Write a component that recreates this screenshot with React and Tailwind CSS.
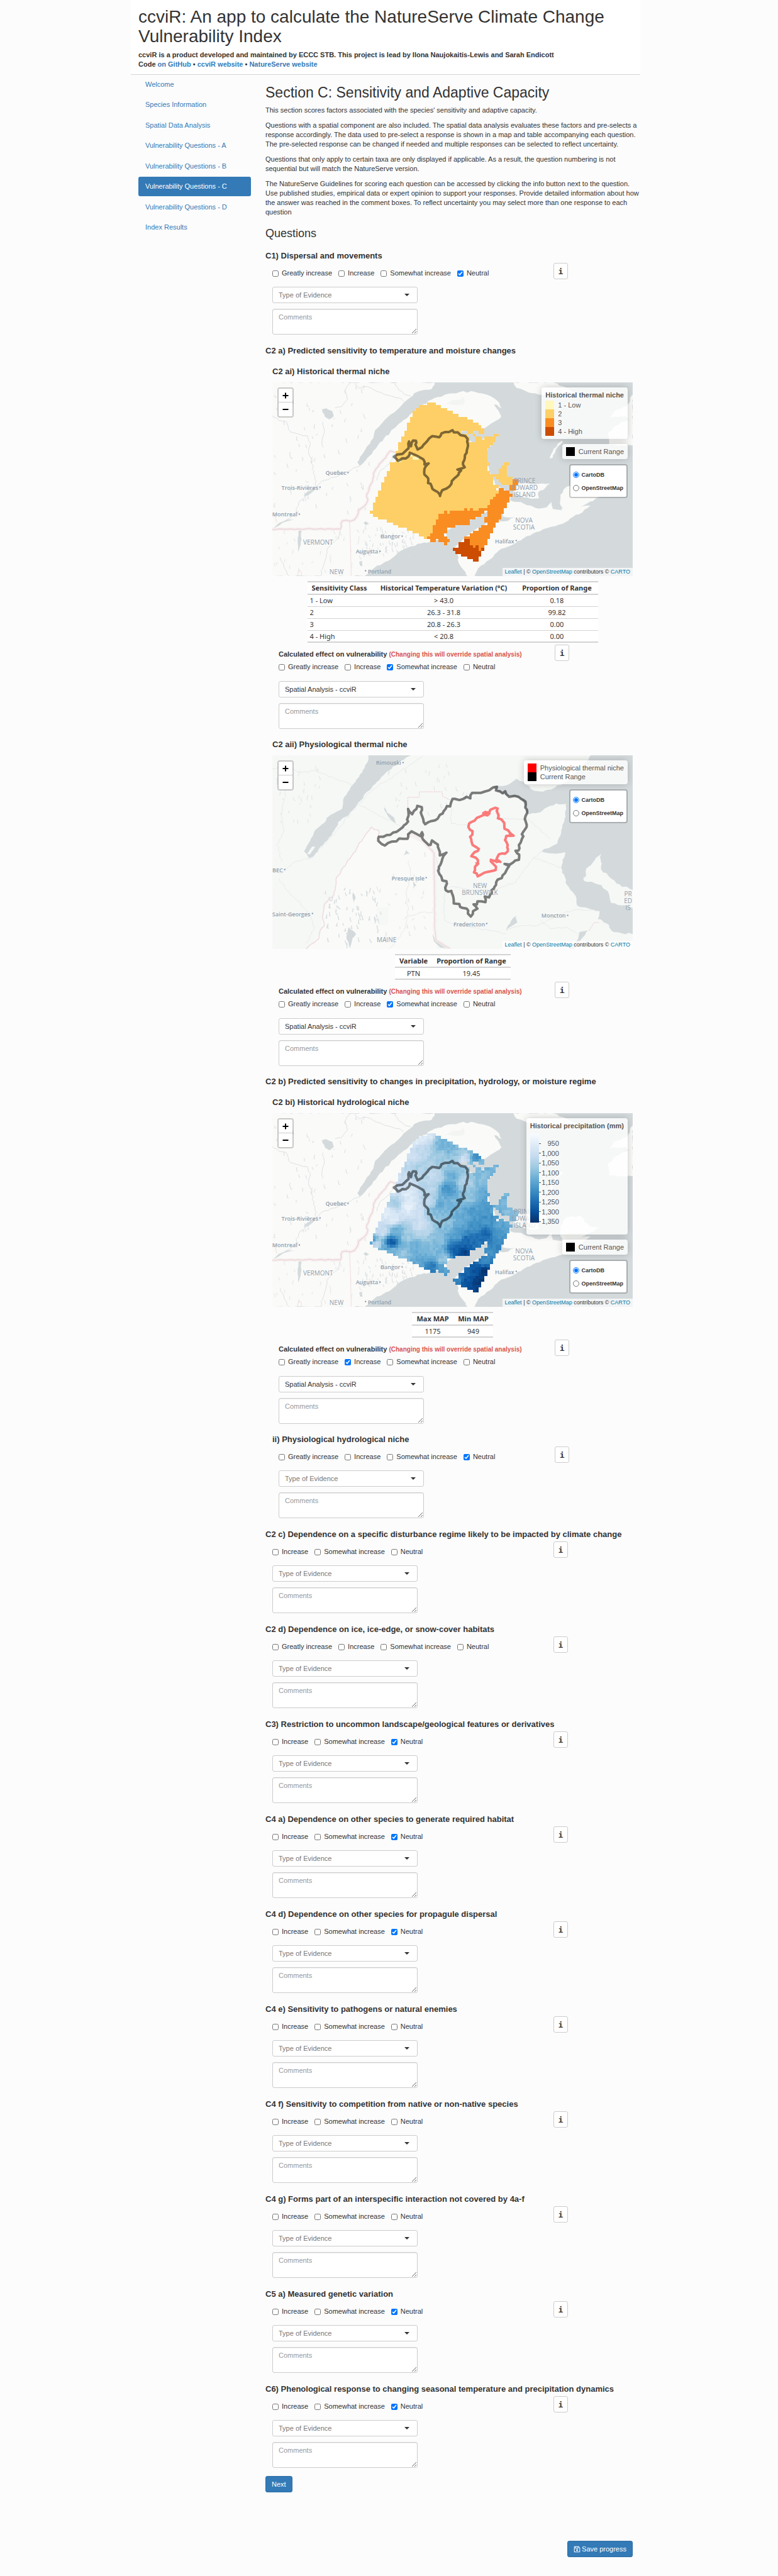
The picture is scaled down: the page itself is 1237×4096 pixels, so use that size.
import React, { useId } from "react";
import { FaRegFloppyDisk } from "react-icons/fa6";

/* ---------- map geometry ---------- */

function roughen(points, amount, closed = true) {
  let seed = 11;
  const rnd = () => {
    seed = (seed * 16807) % 2147483647;
    return seed / 2147483647 - 0.5;
  };
  const out = [];
  const last = closed ? points.length : points.length - 1;
  for (let i = 0; i < last; i++) {
    const [x1, y1] = points[i];
    const [x2, y2] = points[(i + 1) % points.length];
    const steps = Math.max(1, Math.round(Math.hypot(x2 - x1, y2 - y1) / 16));
    out.push([x1, y1]);
    for (let s = 1; s < steps; s++) {
      const t = s / steps;
      out.push([x1 + (x2 - x1) * t + rnd() * amount, y1 + (y2 - y1) * t + rnd() * amount * 1.5]);
    }
  }
  if (!closed) out.push(points[points.length - 1]);
  return "M" + out.map((p) => Math.round(p[0]) + " " + Math.round(p[1])).join("L") + (closed ? "Z" : "");
}

const MAINLAND = [
  [0, 0], [42, 54], [707, 54], [695, 95], [640, 110], [622, 122], [605, 150], [580, 180], [560, 215], [530, 250], [500, 290], [470, 340],
  [455, 400], [430, 450], [410, 500], [390, 550], [400, 572], [412, 558], [440, 510], [470, 455], [500, 400], [540, 340], [560, 310],
  [600, 265], [617, 240], [650, 205], [680, 170], [720, 145], [760, 125], [810, 113], [870, 112], [920, 130], [950, 152], [972, 182],
  [982, 214], [950, 190], [972, 240], [980, 265], [960, 290], [935, 312], [915, 335], [895, 350], [850, 352], [815, 356], [805, 366],
  [835, 392], [862, 425], [900, 410], [950, 380], [958, 388], [940, 440], [918, 480], [918, 540], [930, 600], [945, 650], [960, 700],
  [1000, 725], [1020, 745], [1015, 785], [1060, 795], [1085, 815], [1120, 832], [1165, 828], [1185, 795], [1190, 838], [1225, 845],
  [1245, 865], [1272, 888], [1245, 918], [1200, 945], [1150, 965], [1110, 990], [1070, 1020], [1040, 1048], [1010, 1070], [980, 1085],
  [960, 1110], [935, 1150], [910, 1180], [885, 1205], [870, 1254], [842, 1254], [825, 1215], [806, 1175], [800, 1120], [785, 1085],
  [820, 1030], [870, 970], [915, 930], [940, 905], [990, 915], [1035, 890], [985, 885], [985, 860], [925, 850], [860, 905],
  [790, 945], [752, 975], [755, 1020], [690, 1040], [650, 1052], [610, 1070], [580, 1088], [555, 1112], [535, 1140], [505, 1165],
  [470, 1190], [445, 1220], [420, 1254], [0, 1254],
];
const ISLANDS = [
  [[1030, 660], [1060, 682], [1110, 684], [1180, 680], [1160, 708], [1130, 738], [1135, 772], [1100, 775], [1060, 758], [1030, 742]],
  [[1248, 700], [1222, 750], [1222, 815], [1240, 842], [1285, 838], [1330, 805], [1385, 765], [1340, 755], [1300, 690]],
  [[1225, 835], [1262, 830], [1345, 818], [1300, 870], [1245, 905]],
  [[1030, 54], [1042, 88], [1090, 116], [1150, 132], [1235, 152], [1300, 130], [1250, 90], [1190, 54]],
  [[1518, 130], [1495, 200], [1440, 235], [1425, 272], [1490, 262], [1500, 285], [1450, 320], [1415, 375], [1422, 440], [1518, 445]],
  [[1228, 415], [1195, 465], [1178, 525], [1190, 522], [1203, 470], [1232, 425]],
];
const LAKES = [
  [[245, 222], [262, 215], [288, 232], [294, 262], [276, 284], [258, 268]],
  [[215, 702], [200, 722], [176, 745], [170, 758], [190, 752], [212, 725]],
  [[150, 970], [162, 975], [158, 1060], [150, 1105], [146, 1050]],
  [[130, 905], [100, 915], [70, 940], [45, 960], [70, 925], [100, 905]],
  [[415, 925], [425, 915], [438, 930], [425, 938]],
  [[398, 1165], [410, 1160], [412, 1190], [402, 1192]],
];
const RIVERS = [
  [[42, 260], [70, 290], [100, 300], [115, 360], [150, 375], [185, 385], [198, 430], [190, 480], [205, 540], [210, 620], [222, 700]],
  [[400, 572], [350, 608], [300, 640], [255, 660], [222, 700], [190, 750], [150, 800], [135, 870], [100, 905]],
  [[360, 60], [340, 110], [350, 160], [325, 205], [300, 212]],
  [[545, 60], [560, 100], [585, 130], [608, 138]],
  [[380, 60], [400, 90], [430, 80], [470, 110], [520, 135], [560, 150], [580, 170]],
  [[325, 960], [315, 1010], [270, 1080], [262, 1140], [240, 1254]],
  [[75, 1140], [90, 1200], [110, 1254]],
  [[545, 492], [520, 560], [480, 610], [470, 660]],
  [[250, 300], [255, 350], [245, 420], [250, 455]],
];
const BORDER = [
  [42, 966], [180, 962], [320, 963], [328, 912], [345, 908], [362, 914], [378, 905], [388, 885], [395, 848], [418, 822], [432, 790],
  [428, 750], [440, 700], [452, 670], [456, 618], [480, 560], [526, 479], [544, 488],
];
const RANGE = [
  [602, 420], [610, 450], [618, 414], [630, 415], [628, 440], [637, 470], [655, 455], [675, 420], [685, 400], [697, 387], [725, 394],
  [735, 370], [765, 362], [780, 350], [786, 364], [802, 364], [812, 380], [832, 386], [842, 405], [843, 450], [838, 490], [830, 525],
  [823, 550], [830, 580], [800, 594], [815, 600], [795, 640], [777, 665], [772, 690], [755, 712], [738, 722], [729, 758], [718, 732],
  [698, 715], [690, 682], [680, 678], [680, 648], [665, 625], [665, 590], [682, 556], [665, 562], [660, 530], [645, 518], [625, 502],
  [605, 490], [598, 515], [575, 524], [557, 540], [540, 515], [575, 497], [600, 462],
];

const GULF = [
  [1360, 30], [1300, 130], [1252, 205], [1200, 245], [1150, 270], [1115, 265], [1080, 225], [1042, 190], [1010, 225], [945, 240],
  [960, 262], [1000, 292], [1055, 310], [1075, 350], [1088, 412], [1140, 398], [1170, 365], [1205, 343], [1245, 345], [1238, 440],
  [1225, 510], [1210, 590], [1145, 642], [1205, 655], [1242, 645], [1225, 740], [1250, 850], [1285, 920], [1290, 975], [1382, 1010],
  [1375, 1060], [1410, 1085], [1440, 1140], [1518, 1152], [1540, 1000], [1500, 980], [1430, 960], [1420, 900], [1390, 850],
  [1350, 828], [1318, 822], [1325, 765], [1360, 700], [1388, 655], [1388, 750], [1420, 795], [1452, 840], [1518, 880], [1540, 700], [1540, 30],
];
const STLAWRENCE = [
  [440, 40], [612, 40], [560, 92], [505, 155], [470, 210], [430, 270], [390, 350], [360, 400], [320, 450], [285, 540], [240, 610],
  [210, 672], [192, 682], [172, 640], [200, 560], [218, 508], [262, 450], [282, 412], [328, 375], [332, 320], [372, 225], [410, 150], [428, 95],
];
const INLAND = [
  [[500, 350], [512, 400], [540, 430], [548, 468], [520, 430], [503, 390]],
  [[355, 1110], [385, 1150], [370, 1180], [362, 1240], [345, 1170]],
  [[1040, 1040], [1045, 1080], [1015, 1110], [998, 1130], [1020, 1070]],
  [[1300, 1140], [1335, 1130], [1300, 1200], [1280, 1245], [1262, 1245], [1295, 1180]],
  [[700, 1150], [715, 1200], [765, 1240], [730, 1235], [703, 1195]],
  [[590, 630], [605, 655], [580, 665]],
  [[620, 820], [632, 850], [618, 875]],
  [[370, 880], [382, 920], [375, 960]],
];
const ROADS = [
  [[42, 130], [100, 120], [160, 150], [220, 140], [300, 190], [350, 215], [370, 235]],
  [[42, 740], [75, 780], [140, 700], [205, 680], [300, 520], [390, 350], [470, 240], [600, 110], [660, 45]],
  [[70, 810], [100, 880], [150, 950], [200, 1040], [215, 1110], [180, 1210]],
  [[395, 350], [470, 410], [540, 460], [600, 510], [660, 580], [700, 640], [720, 720], [740, 820], [750, 870], [745, 980], [750, 1070], [790, 1100], [860, 1110], [930, 1130], [1000, 1150]],
  [[750, 870], [790, 860], [850, 880], [950, 880], [1040, 830], [1070, 760], [1110, 680], [1145, 640]],
  [[1110, 680], [1150, 700], [1225, 740]],
  [[600, 700], [610, 800], [590, 900], [600, 1000], [580, 1130], [520, 1245]],
  [[580, 1060], [650, 1018], [700, 1018]],
  [[1000, 1130], [1060, 1100], [1130, 1100], [1220, 1030], [1290, 1000], [1370, 1010]],
  [[775, 330], [775, 470], [850, 480]],
  [[960, 440], [1090, 440], [1180, 560]],
  [[1145, 1070], [1180, 1120], [1250, 1110], [1290, 1150]],
  [[100, 250], [80, 400], [90, 520], [60, 600], [80, 700]],
];
const RANGE_LARGE = [
  [598, 377], [615, 410], [632, 378], [636, 358], [654, 366], [650, 400], [660, 440], [668, 472], [680, 460], [708, 448], [740, 405],
  [757, 360], [770, 362], [780, 315], [808, 322], [838, 302], [853, 312], [860, 278], [895, 278], [930, 262], [945, 245], [962, 240],
  [958, 262], [985, 280], [996, 268], [1000, 285], [1012, 302], [1050, 302], [1070, 322], [1080, 350], [1083, 410], [1076, 440],
  [1083, 490], [1070, 518], [1065, 560], [1052, 600], [1050, 635], [1038, 636], [1053, 660], [1052, 692], [1015, 722], [993, 718],
  [1012, 730], [995, 775], [982, 805], [965, 815], [950, 870], [940, 880], [930, 925], [912, 920], [915, 955], [882, 950], [880, 968],
  [866, 968], [882, 995], [864, 1010], [855, 1044], [843, 1025], [838, 995], [820, 990], [808, 966], [785, 963], [775, 885],
  [762, 890], [752, 880], [755, 825], [738, 820], [726, 780], [724, 750], [735, 705], [743, 668], [755, 648], [728, 665], [720, 598],
  [696, 572], [690, 600], [682, 600], [660, 568], [655, 522], [648, 545], [630, 530], [612, 516], [598, 535], [596, 562], [562, 560],
  [550, 578], [530, 580], [503, 604], [476, 575], [478, 550], [525, 538], [566, 502], [598, 455],
];
const NICHE = [
  [965, 375], [966, 435], [980, 442], [992, 465], [993, 500], [1008, 510], [1030, 543], [1000, 545], [995, 570], [1006, 600],
  [1006, 640], [995, 655], [970, 658], [960, 690], [976, 705], [937, 692], [945, 715], [958, 735], [957, 755], [910, 772], [883, 795],
  [868, 770], [872, 735], [884, 716], [876, 680], [857, 670], [870, 645], [888, 625], [862, 600], [852, 550], [862, 515], [845, 490],
  [848, 467], [870, 450], [880, 432], [900, 420], [912, 398], [930, 400], [935, 382], [955, 370],
];

/* Raster rows: top, then spans of [left, right, class]. */
const RASTER = [
  [178, [675, 711, 2]],
  [195, [641, 733, 2]],
  [213, [630, 757, 2]],
  [231, [617, 780, 2]],
  [249, [617, 804, 2]],
  [267, [606, 840, 2]],
  [285, [606, 863, 2]],
  [303, [594, 886, 2]],
  [319, [594, 897, 2]],
  [337, [594, 909, 2]],
  [354, [582, 816, 2], [840, 863, 2], [886, 909, 2]],
  [372, [582, 840, 2], [863, 874, 2], [945, 969, 2]],
  [390, [570, 850, 2], [874, 897, 2], [909, 957, 2]],
  [408, [570, 850, 2], [874, 957, 2]],
  [426, [558, 945, 2]],
  [444, [558, 933, 2]],
  [462, [558, 922, 2]],
  [480, [547, 922, 2]],
  [498, [547, 606, 2], [606, 617, 1], [617, 922, 2]],
  [514, [547, 617, 2], [617, 641, 1], [641, 922, 2]],
  [532, [547, 558, 2], [558, 570, 1], [570, 922, 2]],
  [550, [524, 933, 2], [990, 1014, 2]],
  [568, [524, 922, 2], [980, 1002, 2]],
  [586, [524, 922, 2], [970, 1002, 2]],
  [603, [512, 933, 2], [970, 1002, 2]],
  [621, [512, 1002, 2]],
  [637, [500, 945, 2], [957, 1026, 2]],
  [655, [500, 945, 2], [970, 1026, 2], [1026, 1050, 3]],
  [672, [488, 945, 2], [980, 1026, 2], [1026, 1050, 3]],
  [690, [488, 970, 2], [1014, 1038, 3]],
  [708, [488, 958, 2], [970, 990, 3], [1014, 1038, 3]],
  [726, [476, 970, 2], [970, 1014, 3]],
  [744, [476, 957, 2], [957, 1026, 3]],
  [762, [464, 945, 2], [945, 1014, 3]],
  [780, [464, 933, 2], [933, 1014, 3]],
  [797, [453, 933, 2], [933, 1002, 3]],
  [815, [453, 922, 2], [922, 1002, 3]],
  [832, [453, 828, 2], [828, 840, 3], [840, 850, 2], [850, 863, 3], [863, 886, 2], [886, 990, 3]],
  [850, [441, 745, 2], [745, 757, 3], [757, 768, 2], [768, 909, 3], [922, 990, 3]],
  [868, [453, 722, 2], [722, 897, 3], [922, 980, 3]],
  [886, [476, 722, 2], [722, 874, 3], [909, 980, 3]],
  [904, [512, 711, 2], [711, 850, 3], [909, 970, 3]],
  [922, [536, 711, 2], [711, 850, 3], [922, 957, 3]],
  [940, [558, 699, 2], [699, 792, 3], [897, 957, 3]],
  [954, [594, 699, 2], [699, 757, 3], [886, 945, 3]],
  [972, [617, 699, 2], [699, 757, 3], [863, 945, 3]],
  [990, [641, 688, 2], [688, 745, 3], [850, 933, 3]],
  [1008, [664, 675, 2], [675, 757, 3], [828, 933, 3]],
  [1026, [688, 711, 3], [722, 768, 3], [828, 850, 4], [850, 922, 3]],
  [1044, [745, 757, 3], [804, 850, 4], [850, 922, 3]],
  [1062, [804, 863, 4], [863, 874, 3], [874, 886, 4], [886, 909, 3]],
  [1080, [780, 886, 4], [886, 897, 3], [897, 909, 4]],
  [1098, [792, 897, 4]],
  [1116, [816, 897, 4]],
  [1132, [840, 886, 4]],
  [1150, [863, 886, 4]],
  [1166],
];
const CLASS_COLORS = { 1: "#fff5b8", 2: "#fecf66", 3: "#f98d22", 4: "#cc4c02" };

const BLUES = [
  [247, 251, 255], [222, 235, 247], [198, 219, 239], [158, 202, 225], [107, 174, 214], [66, 146, 198], [33, 113, 181], [8, 81, 156], [8, 48, 107],
];
function blue(v) {
  const p = Math.min(0.999, Math.max(0, v)) * 8;
  const i = Math.floor(p);
  const t = p - i;
  const c = BLUES[i].map((a, k) => Math.round(a + (BLUES[i + 1][k] - a) * t));
  return "rgb(" + c.join(",") + ")";
}
/* Precipitation samples: x, y, share of the colour scale. */
const SAMPLES = [
  [640, 200, 0.1], [690, 175, 0.15], [735, 200, 0.46], [770, 260, 0.48], [740, 240, 0.48], [885, 310, 0.66], [825, 320, 0.22], [650, 260, 0.28],
  [620, 300, 0.22], [740, 300, 0.36], [800, 290, 0.4], [600, 370, 0.28], [640, 370, 0.33], [900, 335, 0.45], [950, 380, 0.48], [900, 430, 0.44], [570, 440, 0.22],
  [710, 430, 0.25], [780, 430, 0.5], [760, 510, 0.62], [730, 600, 0.52], [690, 500, 0.3], [690, 590, 0.26], [830, 460, 0.3],
  [850, 560, 0.4], [905, 560, 0.54], [545, 520, 0.22], [600, 540, 0.13], [600, 620, 0.1], [545, 590, 0.35], [510, 660, 0.12],
  [640, 650, 0.2], [700, 640, 0.44], [540, 700, 0.14], [490, 770, 0.22], [553, 760, 0.5], [650, 740, 0.2], [465, 850, 0.22],
  [530, 840, 0.85], [500, 880, 0.52], [600, 800, 0.36], [630, 860, 0.5], [720, 820, 0.42], [700, 900, 0.46], [760, 720, 0.42],
  [800, 600, 0.46], [860, 650, 0.58], [920, 600, 0.58], [930, 700, 0.62], [870, 740, 0.62], [820, 700, 0.52], [800, 790, 0.56],
  [840, 830, 0.78], [795, 880, 0.82], [825, 900, 0.94], [890, 820, 0.76], [920, 790, 0.8], [980, 740, 0.55], [1020, 660, 0.42],
  [990, 600, 0.46], [1030, 700, 0.46], [970, 780, 0.6], [960, 860, 0.66], [940, 900, 0.62], [690, 990, 0.72], [640, 960, 0.52],
  [740, 940, 0.4], [745, 1010, 0.56], [570, 910, 0.4], [540, 890, 0.46], [910, 950, 0.66], [870, 1000, 0.86], [910, 1020, 0.98],
  [840, 1020, 0.8], [795, 1080, 0.68], [840, 1080, 0.86], [885, 1080, 0.95], [872, 1130, 0.93], [650, 780, 0.3], [450, 830, 0.6],
];
function precipitation(x, y) {
  let total = 0;
  let weight = 0;
  for (const [sx, sy, v] of SAMPLES) {
    const dx = (x - sx) * 1.4;
    const dy = y - sy;
    const w = 1 / Math.pow(dx * dx + dy * dy + 120, 1.7);
    total += w * v;
    weight += w;
  }
  const n = Math.sin(x * 12.9898 + y * 78.233) * 43758.5453;
  return total / weight + (n - Math.floor(n) - 0.5) * 0.07;
}

function NicheRaster() {
  const rects = [];
  for (let r = 0; r < RASTER.length - 1; r++) {
    const [y, ...spans] = RASTER[r];
    const h = RASTER[r + 1][0] - y;
    spans.forEach(([a, b, c]) => rects.push(<rect key={y + "-" + a} x={a} y={y} width={b - a} height={h} fill={CLASS_COLORS[c]} />));
  }
  return <g shapeRendering="crispEdges">{rects}</g>;
}

function PrecipitationRaster() {
  const rects = [];
  for (let r = 0; r < RASTER.length - 1; r++) {
    const [y, ...spans] = RASTER[r];
    const h = RASTER[r + 1][0] - y;
    spans.forEach(([a, b]) => {
      const n = Math.max(1, Math.round((b - a) / 11.75));
      const w = (b - a) / n;
      for (let i = 0; i < n; i++) {
        const x = a + i * w;
        rects.push(<rect key={y + "-" + a + "-" + i} x={x} y={y} width={w + 0.4} height={h} fill={blue(precipitation(x + w / 2, y - 7))} />);
      }
    });
  }
  return <g shapeRendering="crispEdges">{rects}</g>;
}

function specks(count, seed, box) {
  let s = seed;
  const rnd = () => {
    s = (s * 16807) % 2147483647;
    return s / 2147483647;
  };
  let d = "";
  for (let i = 0; i < count; i++) {
    const x = Math.round(box[0] + rnd() * (box[2] - box[0]));
    const y = Math.round(box[1] + rnd() * (box[3] - box[1]));
    d += "M" + x + " " + y + "l" + Math.round(rnd() * 10 - 5) + " " + Math.round(8 + rnd() * 18) + "l" + Math.round(rnd() * 8 - 2) + " " + Math.round(rnd() * 10 - 4);
  }
  return d;
}

function Line({ d, color, width, opacity = 1, dash }) {
  return (
    <path d={d} fill="none" stroke={color} strokeWidth={width} strokeOpacity={opacity} strokeDasharray={dash} strokeLinejoin="round" strokeLinecap="round" vectorEffect="non-scaling-stroke" />
  );
}

function RegionalBase({ raster, water = "#d4dadc" }) {
  return (
    <svg viewBox="42 54 1476 1200" preserveAspectRatio="none" className="block h-full w-full" aria-hidden="true">
      <rect x="42" y="54" width="1476" height="1200" fill={water} />
      <path d={roughen(MAINLAND, 7)} fill="#fafaf8" />
      {ISLANDS.map((p, i) => (
        <path key={i} d={roughen(p, 7)} fill="#fafaf8" />
      ))}
      <path d="M755 185L780 165L815 160L822 140L830 165L825 190L790 195Z" fill="#f3f5f3" />
      <path d="M430 480L450 440L458 452L425 535L405 555Z" fill="#d4dadc" />
      {LAKES.map((p, i) => (
        <path key={i} d={roughen(p, 5)} fill="#d4dadc" />
      ))}
      <Line d={specks(70, 5, [50, 60, 440, 900])} color="#d9dfe1" width="1" />
      <Line d={specks(60, 9, [390, 930, 620, 1130])} color="#d9dfe1" width="1" />
      <Line d={specks(26, 21, [50, 960, 400, 1240])} color="#e3e8e9" width="1" />
      {RIVERS.map((p, i) => (
        <Line key={i} d={roughen(p, 8, false)} color="#dde2e4" width="1" />
      ))}
      <Line d={roughen(BORDER, 5, false)} color="#f5eced" width="5" opacity={0.7} />
      <Line d={roughen(BORDER, 5, false)} color="#ecd5da" width="1.5" />
      <Line d="M358 915L362 1040L365 1254" color="#f0dfe2" width="1" />
      <Line d="M50 860L60 920M145 1254L150 1215L160 1225L162 1254" color="#f0dfe2" width="1" />
      {raster}
      <Line d={roughen(RANGE, 7)} color="#000000" width="4" opacity={0.5} />
    </svg>
  );
}

function LocalBase() {
  return (
    <svg viewBox="42 45 1476 1200" preserveAspectRatio="none" className="block h-full w-full" aria-hidden="true">
      <rect x="42" y="45" width="1476" height="1200" fill="#f6f8f6" />
      <path d={roughen([[445, 490], [480, 510], [500, 610], [590, 545], [660, 590], [705, 650], [707, 1100], [715, 1250], [180, 1250], [240, 1140], [250, 1000], [295, 910], [305, 800]], 6)} fill="#fafaf8" />
      <path d="M470 990L520 985L515 1090L475 1100Z" fill="#f6f8f6" />
      <path d={roughen(STLAWRENCE, 7)} fill="#d4dadc" />
      <path d="M205 610L218 612L195 660L185 655Z" fill="#f6f8f6" />
      <path d={roughen(GULF, 8)} fill="#d4dadc" />
      {INLAND.map((p, i) => (
        <path key={i} d={roughen(p, 6)} fill="#d4dadc" />
      ))}
      <Line d={specks(60, 31, [260, 860, 480, 1220])} color="#d9dfe1" width="1.5" />
      <Line d={specks(30, 17, [60, 100, 240, 460])} color="#dfe4e5" width="1" />
      <Line d={specks(30, 77, [520, 100, 840, 400])} color="#dfe4e5" width="1" />
      <Line d={specks(24, 41, [470, 640, 680, 1200])} color="#dde2e4" width="1" />
      {ROADS.map((p, i) => (
        <Line key={i} d={roughen(p, 8, false)} color="#e8ebeb" width="1" />
      ))}
      <Line d="M597 377L597 305L644 305L644 271L737 271L740 300L775 325" color="#efc8cd" width="1" dash="2 2" />
      <Line d="M1340 1130L1360 1081L1382 1081" color="#efc8cd" width="1" dash="2 2" />
      <Line d={roughen([[180, 1245], [232, 1180], [238, 1130], [255, 1100], [248, 1040], [258, 960], [295, 908], [305, 800], [447, 490], [478, 510], [476, 550]], 5, false)} color="#eddbdf" width="1.5" />
      <Line d={roughen([[600, 530], [660, 580], [704, 650], [706, 900], [706, 1100], [712, 1190], [768, 1240]], 4, false)} color="#f5eced" width="5" opacity={0.7} />
      <Line d={roughen([[680, 610], [704, 650], [706, 900], [706, 1100], [712, 1190], [768, 1240]], 2, false)} color="#eddbdf" width="1.5" />
      <g opacity="0.5">
        <Line d={roughen(RANGE_LARGE, 8)} color="#000000" width="4" />
      </g>
      <g opacity="0.5">
        <Line d={roughen(NICHE, 8)} color="#ff0000" width="4" />
        <path d="M900 400L915 388L938 405L925 425L905 420Z M1010 530L1036 543L1015 552Z M935 688L980 705L960 714Z M872 705L892 716L880 735Z" fill="#ff0000" />
      </g>
    </svg>
  );
}

/* ---------- map furniture ---------- */

/* Places are pinned by the share of the map's width and height. */
function Place({ left, top, children, big = false, dot }) {
  return (
    <span
      style={{ left: left + "%", top: top + "%" }}
      className={
        "absolute flex -translate-x-1/2 -translate-y-1/2 items-center gap-0.5 text-center whitespace-nowrap text-[#909fae] font-['Open_Sans',sans-serif] " +
        (big ? "text-[10px] leading-[11px]" : "text-[9px] leading-[11px] font-semibold")
      }
    >
      {dot === "left" && <i className="size-[2px] bg-[#7f90a3]" />}
      <span>{children}</span>
      {dot === "right" && <i className="size-[2px] bg-[#7f90a3]" />}
    </span>
  );
}

function RegionalPlaces() {
  return (
    <>
      <Place left={18} top={46.5} dot="right">Quebec</Place>
      <Place left={8} top={54.2} dot="right">Trois-Rivières</Place>
      <Place left={3.8} top={67.9} dot="right">Montreal</Place>
      <Place left={33.1} top={79.3} dot="right">Bangor</Place>
      <Place left={26.6} top={87.1} dot="right">Augusta</Place>
      <Place left={29.4} top={97.4} dot="left">Portland</Place>
      <Place left={64.8} top={81.7} dot="right">Halifax</Place>
      <Place left={12.7} top={82.5} big>VERMONT</Place>
      <Place left={17.8} top={97.8} big>NEW</Place>
      <Place left={70} top={54.3} big>
        PRINCE<br />EDWARD<br />ISLAND
      </Place>
      <Place left={69.8} top={72.9} big>
        NOVA<br />SCOTIA
      </Place>
    </>
  );
}

function LocalPlaces() {
  return (
    <>
      <Place left={32.6} top={3.6} dot="right">Rimouski</Place>
      <Place left={1.8} top={59} dot="right">BEC</Place>
      <Place left={38} top={63.3} dot="right">Presque Isle</Place>
      <Place left={5.6} top={81.7} dot="right">Saint-Georges</Place>
      <Place left={78.4} top={82.5} dot="right">Moncton</Place>
      <Place left={55} top={87} dot="right">Fredericton</Place>
      <Place left={31.7} top={95.2} big>MAINE</Place>
      <Place left={57.6} top={69.2} big>
        NEW<br />BRUNSWICK
      </Place>
      <Place left={98.7} top={75} big>
        PR<br />ED<br />IS
      </Place>
    </>
  );
}

function ZoomControl() {
  const btn = "flex h-[22px] w-[22px] items-center justify-center bg-white";
  return (
    <div className="absolute top-2 left-2 flex w-[26px] flex-col divide-y divide-[#cccccc] overflow-hidden rounded-[4px] border-2 border-black/20 bg-clip-padding">
      <button type="button" aria-label="Zoom in" className={btn}>
        <svg viewBox="0 0 10 10" className="size-[10px]"><path d="M5 0.5V9.5M0.5 5H9.5" stroke="#000" strokeWidth="2" /></svg>
      </button>
      <button type="button" aria-label="Zoom out" className={btn}>
        <svg viewBox="0 0 10 10" className="size-[10px]"><path d="M0.5 5H9.5" stroke="#000" strokeWidth="2" /></svg>
      </button>
    </div>
  );
}

function Legend({ title, rows, children }) {
  return (
    <div className="rounded-[4px] bg-white/80 px-[6px] py-[5px] text-[11px] leading-[14px] text-[#555555] shadow-[0_0_12px_rgba(0,0,0,0.2)]">
      {title && <div className="mb-0.5 leading-[14px] font-bold">{title}</div>}
      {rows && (
        <ul>
          {rows.map(([color, label]) => (
            <li key={label} className="flex gap-[6px]">
              <i className="h-[14px] w-[14px]" style={{ background: color }} />
              {label}
            </li>
          ))}
        </ul>
      )}
      {children}
    </div>
  );
}

function PrecipitationScale() {
  return (
    <div className="mt-[6px] flex h-[155px]">
      <i className="h-[141px] w-[14px] bg-[linear-gradient(#f7fbff,#deebf7,#c6dbef,#9ecae1,#6baed6,#4292c6,#2171b5,#08519c,#08306b)]" />
      <ul className="mt-2 flex h-[138px] flex-col justify-between">
        {["950", "1,000", "1,050", "1,100", "1,150", "1,200", "1,250", "1,300", "1,350"].map((v) => (
          <li key={v} className="flex w-8 items-center justify-between leading-[14px]">
            <i className="h-px w-[3px] bg-[#555555]" />
            {v}
          </li>
        ))}
      </ul>
    </div>
  );
}

function LayerControl() {
  const name = useId();
  return (
    <div role="radiogroup" aria-label="Base map" className="rounded-[4px] border-2 border-black/20 bg-white bg-clip-padding py-2 pr-[5px] pl-1 text-[9px] leading-[12px] font-bold text-[#333333]">
      <label className="flex h-[13px] items-center gap-[3px]">
        <input type="radio" name={name} defaultChecked className="size-[10px]" /> CartoDB
      </label>
      <label className="mt-2 flex h-[13px] items-center gap-[3px]">
        <input type="radio" name={name} className="size-[10px]" /> OpenStreetMap
      </label>
    </div>
  );
}

function LeafletMap({ base, places, children }) {
  return (
    <div className="relative h-[308px] overflow-hidden bg-[#d4dadc]">
      {base}
      {places}
      <ZoomControl />
      <div className="absolute top-2 right-2 flex flex-col items-end gap-2">
        {children}
        <LayerControl />
      </div>
      <p className="absolute right-0 bottom-0 bg-white/70 px-1 text-[9px] leading-[13px] text-[#333333]">
        <a href="#leaflet" className="text-[#0078a8]">Leaflet</a> | © <a href="#osm" className="text-[#0078a8]">OpenStreetMap</a> contributors © <a href="#carto" className="text-[#0078a8]">CARTO</a>
      </p>
    </div>
  );
}

/* ---------- form parts ---------- */

function Info() {
  return (
    <button type="button" aria-label="Guidelines" className="flex h-[26px] w-[23px] items-center justify-center rounded-[3px] border border-[#cccccc] bg-white text-[13px] leading-none font-bold text-[#333333] font-['DejaVu_Sans_Mono',monospace]">
      i
    </button>
  );
}

const FOUR = ["Greatly increase", "Increase", "Somewhat increase", "Neutral"];
const THREE = FOUR.slice(1);

function Checks({ options, checked }) {
  return (
    <div className="flex gap-[10px] leading-[15px]">
      {options.map((o) => (
        <label key={o} className="flex items-center gap-[5px]">
          <input type="checkbox" defaultChecked={o === checked} className="size-[10px]" />
          {o}
        </label>
      ))}
    </div>
  );
}

function Evidence({ value }) {
  return (
    <div className="w-[231px]">
      <div className="relative">
        <select
          aria-label="Type of Evidence"
          defaultValue={value || ""}
          className={"block h-[26px] w-full appearance-none rounded-[3px] border border-[#cccccc] bg-white px-[9px] text-[11px] " + (value ? "text-[#333333]" : "text-[#787878]")}
        >
          <option value="">Type of Evidence</option>
          <option>Spatial Analysis - ccviR</option>
        </select>
        <svg viewBox="0 0 8 4" className="pointer-events-none absolute top-[11px] right-[13px] h-1 w-2" aria-hidden="true">
          <path d="M0 0H8L4 4Z" fill="#333333" />
        </svg>
      </div>
      <textarea
        aria-label="Comments"
        placeholder="Comments"
        className="mt-[9px] block h-[41px] w-full resize rounded-[3px] border border-[#cccccc] bg-white px-[9px] py-[5px] text-[11px] leading-[15px] shadow-[inset_0_1px_1px_rgba(0,0,0,0.075)] placeholder:text-[#999999]"
      />
    </div>
  );
}

function Heading({ children }) {
  return <h4 className="text-[13px] leading-[14px] font-bold whitespace-nowrap">{children}</h4>;
}

function Question({ title, options = THREE, checked }) {
  return (
    <section>
      <Heading>{title}</Heading>
      <div className="mt-1 pl-[11px]">
        <div className="flex items-start">
          <div className="w-[78%] pt-[9px]">
            <Checks options={options} checked={checked} />
          </div>
          <Info />
        </div>
        <div className="mt-3">
          <Evidence />
        </div>
      </div>
    </section>
  );
}

function Calculated({ checked }) {
  return (
    <div className="mt-[3px] pl-[10px]">
      <div className="flex items-start">
        <div className="w-[78%] pt-2">
          <p className="mb-[5px] leading-[15px] font-bold">
            Calculated effect on vulnerability <span className="text-[10px] text-[#d9534f]">(Changing this will override spatial analysis)</span>
          </p>
          <Checks options={FOUR} checked={checked} />
        </div>
        <Info />
      </div>
      <div className="mt-[15px]">
        <Evidence value="Spatial Analysis - ccviR" />
      </div>
    </div>
  );
}

function ResultTable({ columns, rows }) {
  return (
    <table className="mx-auto mt-2 table-fixed border-y-2 border-[#d3d3d3] bg-white text-[11px] text-[#333333] font-['Noto_Sans',sans-serif]">
      <colgroup>
        {columns.map(([label, width]) => (
          <col key={label} className={width} />
        ))}
      </colgroup>
      <thead>
        <tr className="h-[20px] border-b-2 border-[#d3d3d3]">
          {columns.map(([label]) => (
            <th key={label} scope="col" className="p-0 leading-[18px] font-bold whitespace-nowrap">{label}</th>
          ))}
        </tr>
      </thead>
      <tbody>
        {rows.map((r) => (
          <tr key={r[0]} className="h-[19px] border-t border-[#d3d3d3] text-center first:border-t-0">
            {r.map((c, i) => (
              <td key={i} className={i === 0 && r.length === 3 ? "p-0 pl-1 text-left leading-[17px]" : "p-0 leading-[17px]"}>{c}</td>
            ))}
          </tr>
        ))}
      </tbody>
    </table>
  );
}

const NAV = [
  "Welcome", "Species Information", "Spatial Data Analysis", "Vulnerability Questions - A", "Vulnerability Questions - B",
  "Vulnerability Questions - C", "Vulnerability Questions - D", "Index Results",
];

const QUESTIONS = [
  { title: "C2 c) Dependence on a specific disturbance regime likely to be impacted by climate change" },
  { title: "C2 d) Dependence on ice, ice-edge, or snow-cover habitats", options: FOUR },
  { title: "C3) Restriction to uncommon landscape/geological features or derivatives", checked: "Neutral" },
  { title: "C4 a) Dependence on other species to generate required habitat", checked: "Neutral" },
  { title: "C4 d) Dependence on other species for propagule dispersal", checked: "Neutral" },
  { title: "C4 e) Sensitivity to pathogens or natural enemies" },
  { title: "C4 f) Sensitivity to competition from native or non-native species" },
  { title: "C4 g) Forms part of an interspecific interaction not covered by 4a-f" },
  { title: "C5 a) Measured genetic variation", checked: "Neutral" },
  { title: "C6) Phenological response to changing seasonal temperature and precipitation dynamics", checked: "Neutral" },
];

export default function App() {
  return (
    <div className="min-h-screen bg-[#fcfcfc] pr-[11px] pb-[29px] text-[11px] leading-[15px] text-[#333333] font-['Liberation_Sans',Arial,sans-serif]">
      <div className="mx-auto max-w-[810px]">
        <header className="border-b border-[#d6d6d6] bg-white px-3 pt-[11px] pb-[8px]">
          <h1 className="text-[28px] leading-[31px]">ccviR: An app to calculate the NatureServe Climate Change Vulnerability Index</h1>
          <h5 className="mt-[7px] font-bold">
            ccviR is a product developed and maintained by ECCC STB. This project is lead by Ilona Naujokaitis-Lewis and Sarah Endicott
            <br />
            Code <a href="#github" className="text-[#337ab7]">on GitHub</a> • <a href="#ccvir" className="text-[#337ab7]">ccviR website</a> • <a href="#natureserve" className="text-[#337ab7]">NatureServe website</a>
          </h5>
        </header>

        <div className="flex items-start gap-[23px] px-3">
          <nav className="flex h-[258px] w-[179px] flex-none flex-col justify-between">
            {NAV.map((n) => (
              <a
                key={n}
                href="#section"
                className={"flex h-[31px] items-center rounded-[3px] px-[11px] " + (n.endsWith("- C") ? "bg-[#337ab7] text-white" : "text-[#337ab7]")}
              >
                {n}
              </a>
            ))}
          </nav>

          <main className="min-w-0 flex-1 pt-4">
            <h2 className="text-[23px] leading-[25px]">Section C: Sensitivity and Adaptive Capacity</h2>
            <div className="mt-2 flex flex-col gap-[9px] whitespace-nowrap">
              <p>This section scores factors associated with the species' sensitivity and adaptive capacity.</p>
              <p>
                Questions with a spatial component are also included. The spatial data analysis evaluates these factors and pre-selects a<br />
                response accordingly. The data used to pre-select a response is shown in a map and table accompanying each question.<br />
                The pre-selected response can be changed if needed and multiple responses can be selected to reflect uncertainty.
              </p>
              <p>
                Questions that only apply to certain taxa are only displayed if applicable. As a result, the question numbering is not<br />
                sequential but will match the NatureServe version.
              </p>
              <p>
                The NatureServe Guidelines for scoring each question can be accessed by clicking the info button next to the question.<br />
                Use published studies, empirical data or expert opinion to support your responses. Provide detailed information about how<br />
                the answer was reached in the comment boxes. To reflect uncertainty you may select more than one response to each<br />
                question
              </p>
            </div>

            <h3 className="mt-4 mb-[19px] text-[18px] leading-5">Questions</h3>

            <div className="flex flex-col gap-[19px]">
              <Question title="C1) Dispersal and movements" options={FOUR} checked="Neutral" />

              <Heading>C2 a) Predicted sensitivity to temperature and moisture changes</Heading>

              <section className="pl-[11px]">
                <Heading>C2 ai) Historical thermal niche</Heading>
                <div className="mt-[10px]">
                  <LeafletMap base={<RegionalBase raster={<NicheRaster />} />} places={<RegionalPlaces />}>
                    <Legend title="Historical thermal niche" rows={[["#fff7bc", "1 - Low"], ["#fecf66", "2"], ["#f98d22", "3"], ["#cc4c02", "4 - High"]]} />
                    <Legend rows={[["#000000", "Current Range"]]} />
                  </LeafletMap>
                </div>
                <ResultTable
                  columns={[["Sensitivity Class", "w-[102px]"], ["Historical Temperature Variation (°C)", "w-[230px]"], ["Proportion of Range", "w-[130px]"]]}
                  rows={[["1 - Low", "> 43.0", "0.18"], ["2", "26.3 - 31.8", "99.82"], ["3", "20.8 - 26.3", "0.00"], ["4 - High", "< 20.8", "0.00"]]}
                />
                <Calculated checked="Somewhat increase" />
              </section>

              <section className="-mt-px pl-[11px]">
                <Heading>C2 aii) Physiological thermal niche</Heading>
                <div className="mt-[10px]">
                  <LeafletMap base={<LocalBase />} places={<LocalPlaces />}>
                    <Legend rows={[["#ff0000", "Physiological thermal niche"], ["#000000", "Current Range"]]} />
                  </LeafletMap>
                </div>
                <ResultTable columns={[["Variable", "w-[60px]"], ["Proportion of Range", "w-[124px]"]]} rows={[["PTN", "19.45"]]} />
                <Calculated checked="Somewhat increase" />
              </section>

              <div className="-mt-px">
                <Heading>C2 b) Predicted sensitivity to changes in precipitation, hydrology, or moisture regime</Heading>
              </div>

              <section className="pl-[11px]">
                <Heading>C2 bi) Historical hydrological niche</Heading>
                <div className="mt-[10px]">
                  <LeafletMap base={<RegionalBase raster={<PrecipitationRaster />} />} places={<RegionalPlaces />}>
                    <Legend title="Historical precipitation (mm)">
                      <PrecipitationScale />
                    </Legend>
                    <Legend rows={[["#000000", "Current Range"]]} />
                  </LeafletMap>
                </div>
                <ResultTable columns={[["Max MAP", "w-[66px]"], ["Min MAP", "w-[63px]"]]} rows={[["1175", "949"]]} />
                <Calculated checked="Increase" />
              </section>

              <section className="-mt-px pl-[11px]">
                <Heading>ii) Physiological hydrological niche</Heading>
                <div className="mt-1 pl-[10px]">
                  <div className="flex items-start">
                    <div className="w-[78%] pt-[9px]">
                      <Checks options={FOUR} checked="Neutral" />
                    </div>
                    <Info />
                  </div>
                  <div className="mt-3">
                    <Evidence />
                  </div>
                </div>
              </section>

              {QUESTIONS.map((q) => (
                <Question key={q.title} {...q} />
              ))}
            </div>

            <button type="button" className="mt-[13px] block h-[26px] rounded-[3px] border border-[#2e6da4] bg-[#337ab7] px-[9px] text-white">
              Next
            </button>
            <div className="mt-[77px] flex justify-end">
              <button type="button" className="flex h-[26px] items-center gap-[2px] rounded-[3px] border border-[#2e6da4] bg-[#337ab7] px-[9px] text-white">
                <FaRegFloppyDisk className="size-[11px]" /> Save progress
              </button>
            </div>
          </main>
        </div>
      </div>
    </div>
  );
}
